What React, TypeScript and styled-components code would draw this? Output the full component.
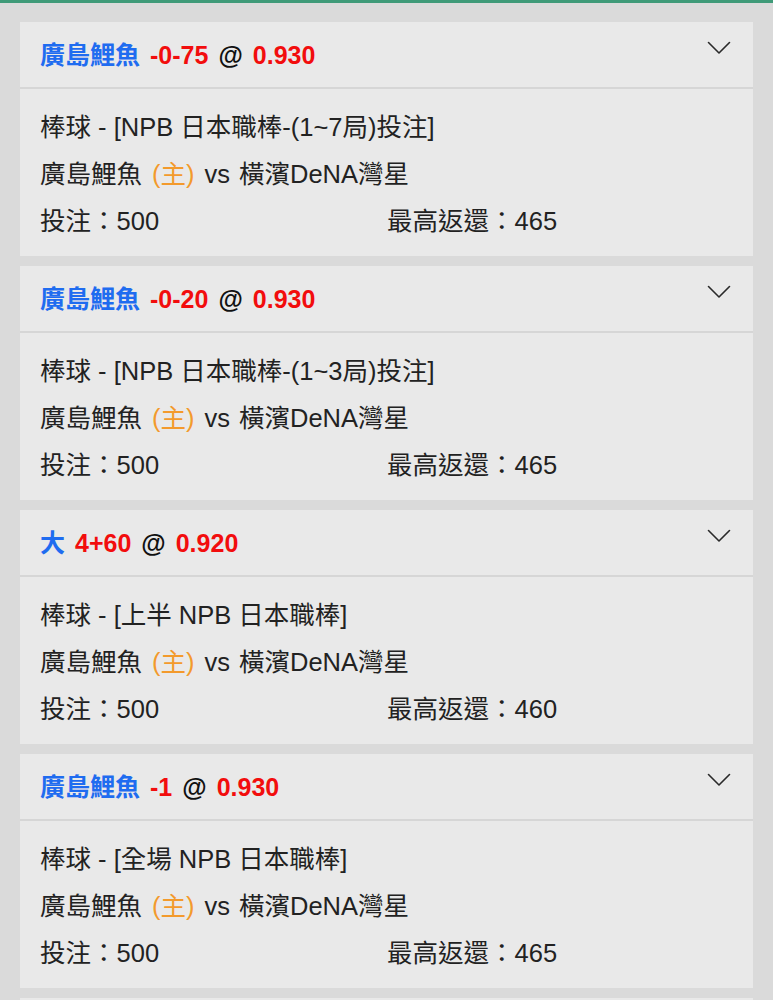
import styled, { createGlobalStyle } from 'styled-components';

type Bet = {
  team: string;
  line: string;
  odds: string;
  league: string;
  home: string;
  away: string;
  stake: number;
  payout: number;
};

const bets: Bet[] = [
  { team: '廣島鯉魚', line: '-0-75', odds: '0.930', league: '棒球 - [NPB 日本職棒-(1~7局)投注]', home: '廣島鯉魚', away: '橫濱DeNA灣星', stake: 500, payout: 465 },
  { team: '廣島鯉魚', line: '-0-20', odds: '0.930', league: '棒球 - [NPB 日本職棒-(1~3局)投注]', home: '廣島鯉魚', away: '橫濱DeNA灣星', stake: 500, payout: 465 },
  { team: '大', line: '4+60', odds: '0.920', league: '棒球 - [上半 NPB 日本職棒]', home: '廣島鯉魚', away: '橫濱DeNA灣星', stake: 500, payout: 460 },
  { team: '廣島鯉魚', line: '-1', odds: '0.930', league: '棒球 - [全場 NPB 日本職棒]', home: '廣島鯉魚', away: '橫濱DeNA灣星', stake: 500, payout: 465 },
  { team: '廣島鯉魚', line: '-1', odds: '0.930', league: '棒球 - [全場 NPB 日本職棒]', home: '廣島鯉魚', away: '橫濱DeNA灣星', stake: 500, payout: 465 },
];

const GlobalStyle = createGlobalStyle`
  html, body {
    margin: 0;
    padding: 0;
    background: #dadada;
    font-family: "Liberation Sans", "Noto Sans CJK TC", sans-serif;
  }
`

const Page = styled.div`
  height: 1000px;
  overflow: hidden;
  border-top: 3px solid #3f9a78;
  background: #dadada;
`

const List = styled.div`
  display: flex;
  flex-direction: column;
  gap: 10px;
  padding: 19px 20px 0 20px;
`

const Card = styled.div`
  background: #e9e9e9;
  display: flex;
  flex-direction: column;
`

const Header = styled.div`
  height: 67px;
  box-sizing: border-box;
  display: flex;
  align-items: center;
  justify-content: space-between;
  padding: 0 22px 3px 20px;
  border-bottom: 2px solid #d6d6d6;
  font-size: 25px;
  font-weight: 700;
`

const Title = styled.div`
  display: flex;
  align-items: baseline;
  gap: 10px;
  white-space: nowrap;
`

const Team = styled.span`
  color: #1f6cf0;
`

const Red = styled.span`
  color: #f20d0d;
`

const At = styled.span`
  color: #111;
`

const Toggle = styled.span`
  align-self: flex-start;
  margin-top: 19px;
  display: flex;
`

const Body = styled.div`
  padding: 15px 20px 11px 20px;
  font-size: 25.5px;
  color: #222;
`

const Line = styled.div`
  height: 47px;
  line-height: 47px;
  white-space: nowrap;
`

const Home = styled.span`
  color: #f39a2c;
  margin: 0 10px;
`

const Away = styled.span`
  margin-left: 9px;
`

const Col = styled.span<{ $w?: number }>`
  display: inline-block;
  width: ${p => (p.$w ? `${p.$w}px` : 'auto')};
`

const Chevron = () => (
  <svg width="24" height="14" viewBox="0 0 24 14" fill="none">
    <path d="M1.5 1.5 L12 12 L22.5 1.5" stroke="#2a2a2a" strokeWidth="1.6" strokeLinecap="round" strokeLinejoin="round" />
  </svg>
);

const BetCard = ({ bet }: { bet: Bet }) => (
  <Card>
    <Header>
      <Title>
        <Team>{bet.team}</Team>
        <Red>{bet.line}</Red>
        <At>@</At>
        <Red>{bet.odds}</Red>
      </Title>
      <Toggle>
        <Chevron />
      </Toggle>
    </Header>
    <Body>
      <Line>{bet.league}</Line>
      <Line>
        {bet.home}
        <Home>(主)</Home>
        vs
        <Away>{bet.away}</Away>
      </Line>
      <Line>
        <Col $w={347}>投注：{bet.stake}</Col>
        <Col>最高返還：{bet.payout}</Col>
      </Line>
    </Body>
  </Card>
);

export default function App() {
  return (
    <Page>
      <GlobalStyle />
      <List>
        {bets.map((b, i) => (
          <BetCard key={i} bet={b} />
        ))}
      </List>
    </Page>
  );
}
